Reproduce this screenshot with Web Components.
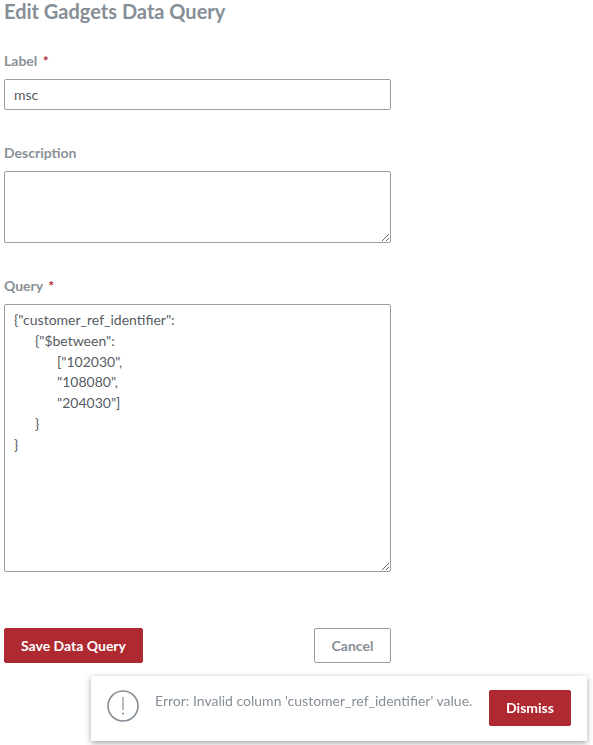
<!doctype html>
<html>
<head>
<meta charset="UTF-8">
<style>
  html, body { margin: 0; height: 100%; background: #fff; }
  body { font-family: Lato, sans-serif; color: #868e96; overflow: hidden; }
</style>
</head>
<body>
<template id="form-field">
  <style>
    :host { display: block; }
    label { display: block; font-size: 14px; font-weight: 700; line-height: 18px; margin-bottom: 9px; color: #8a9198; }
    .req { color: #af2930; margin-left: 2px; display: none; }
    :host([required]) .req { display: inline; }
    .box { box-sizing: border-box; border: 1px solid #9a9ea3; border-radius: 2px; width: 387px; padding: 0 9px; font-size: 14px; color: #555c63; background: #fff; }
    :host([multi]) .box { resize: vertical; overflow: auto; padding-top: 5px; line-height: 20.8px; }
    :host(:not([multi])) .box { height: 31px; line-height: 29px; }
  </style>
  <label><span class="name"></span> <span class="req">*</span></label>
  <div class="box"><slot></slot></div>
</template>

<template id="action-button">
  <style>
    :host { display: inline-block; }
    button { display: block; box-sizing: border-box; height: 100%; width: 100%; font: 700 14px Lato, sans-serif; border-radius: 2px; padding: 0 0 var(--label-lift, 0); cursor: pointer; background: #af2930; color: #fff; border: 1px solid #af2930; }
    :host([plain]) button { background: #fff; color: #868e96; border-color: #9a9ea3; }
  </style>
  <button><slot></slot></button>
</template>

<template id="toast-message">
  <style>
    :host { position: fixed; left: 91px; top: 676px; width: 496px; height: 65px; box-sizing: border-box; background: #fff; box-shadow: 0 2px 6px rgba(0,0,0,.36); display: flex; align-items: flex-start; padding: 14px 16px 0 16px; }
    svg { width: 32px; height: 32px; flex: none; }
    .msg { flex: 1; font-size: 14px; line-height: 21px; margin-left: 16px; color: #868e96; }
    ::slotted(action-button) { width: 82px; height: 36px; --label-lift: 2px; }
  </style>
  <svg viewBox="0 0 32 32" fill="none" stroke="#868e96">
    <circle cx="16" cy="16" r="15" stroke-width="1.6"/>
    <path d="M16 7v13" stroke-width="1.2"/>
    <circle cx="16" cy="23.5" r="1.1" fill="#868e96" stroke="none"/>
  </svg>
  <div class="msg"><slot name="text"></slot></div>
  <slot name="action"></slot>
</template>

<template id="query-form">
  <style>
    :host { display: block; padding-left: 4px; width: 387px; }
    h1 { margin: 0; font-size: 20px; line-height: 22px; font-weight: 700; color: #868e96; }
    .fields { margin-top: 30px; display: flex; flex-direction: column; gap: 34px; }
    .actions { display: flex; justify-content: space-between; margin-top: 56px; }
    ::slotted(action-button) { height: 35px; }
    ::slotted(action-button[primary]) { width: 139px; }
    ::slotted(action-button[plain]) { width: 77px; }
  </style>
  <h1><slot name="title"></slot></h1>
  <div class="fields"><slot name="field"></slot></div>
  <div class="actions"><slot name="action"></slot></div>
</template>

<query-form>
  <span slot="title">Edit Gadgets Data Query</span>
  <form-field slot="field" label="Label" required>msc</form-field>
  <form-field slot="field" label="Description" multi rows="72"></form-field>
  <form-field slot="field" label="Query" required multi rows="268">
    <div>{"customer_ref_identifier":</div>
    <div style="margin-left:21px">{"$between":</div>
    <div style="margin-left:43px">["102030",</div>
    <div style="margin-left:43px">"108080",</div>
    <div style="margin-left:43px">"204030"]</div>
    <div style="margin-left:21px">}</div>
    <div>}</div>
  </form-field>
  <action-button slot="action" primary>Save Data Query</action-button>
  <action-button slot="action" plain>Cancel</action-button>
</query-form>

<toast-message>
  <span slot="text">Error: Invalid column 'customer_ref_identifier' value.</span>
  <action-button slot="action">Dismiss</action-button>
</toast-message>

<script>
  function fromTemplate(el, id) {
    const root = el.attachShadow({ mode: 'open' });
    root.appendChild(document.importNode(document.getElementById(id).content, true));
    return root;
  }
  customElements.define('form-field', class extends HTMLElement {
    constructor() {
      super();
      const root = fromTemplate(this, 'form-field');
      root.querySelector('.name').textContent = this.getAttribute('label');
      if (this.hasAttribute('rows')) root.querySelector('.box').style.height = this.getAttribute('rows') + 'px';
    }
  });
  customElements.define('action-button', class extends HTMLElement {
    constructor() { super(); fromTemplate(this, 'action-button'); }
  });
  customElements.define('toast-message', class extends HTMLElement {
    constructor() { super(); fromTemplate(this, 'toast-message'); }
  });
  customElements.define('query-form', class extends HTMLElement {
    constructor() { super(); fromTemplate(this, 'query-form'); }
  });
</script>
</body>
</html>
